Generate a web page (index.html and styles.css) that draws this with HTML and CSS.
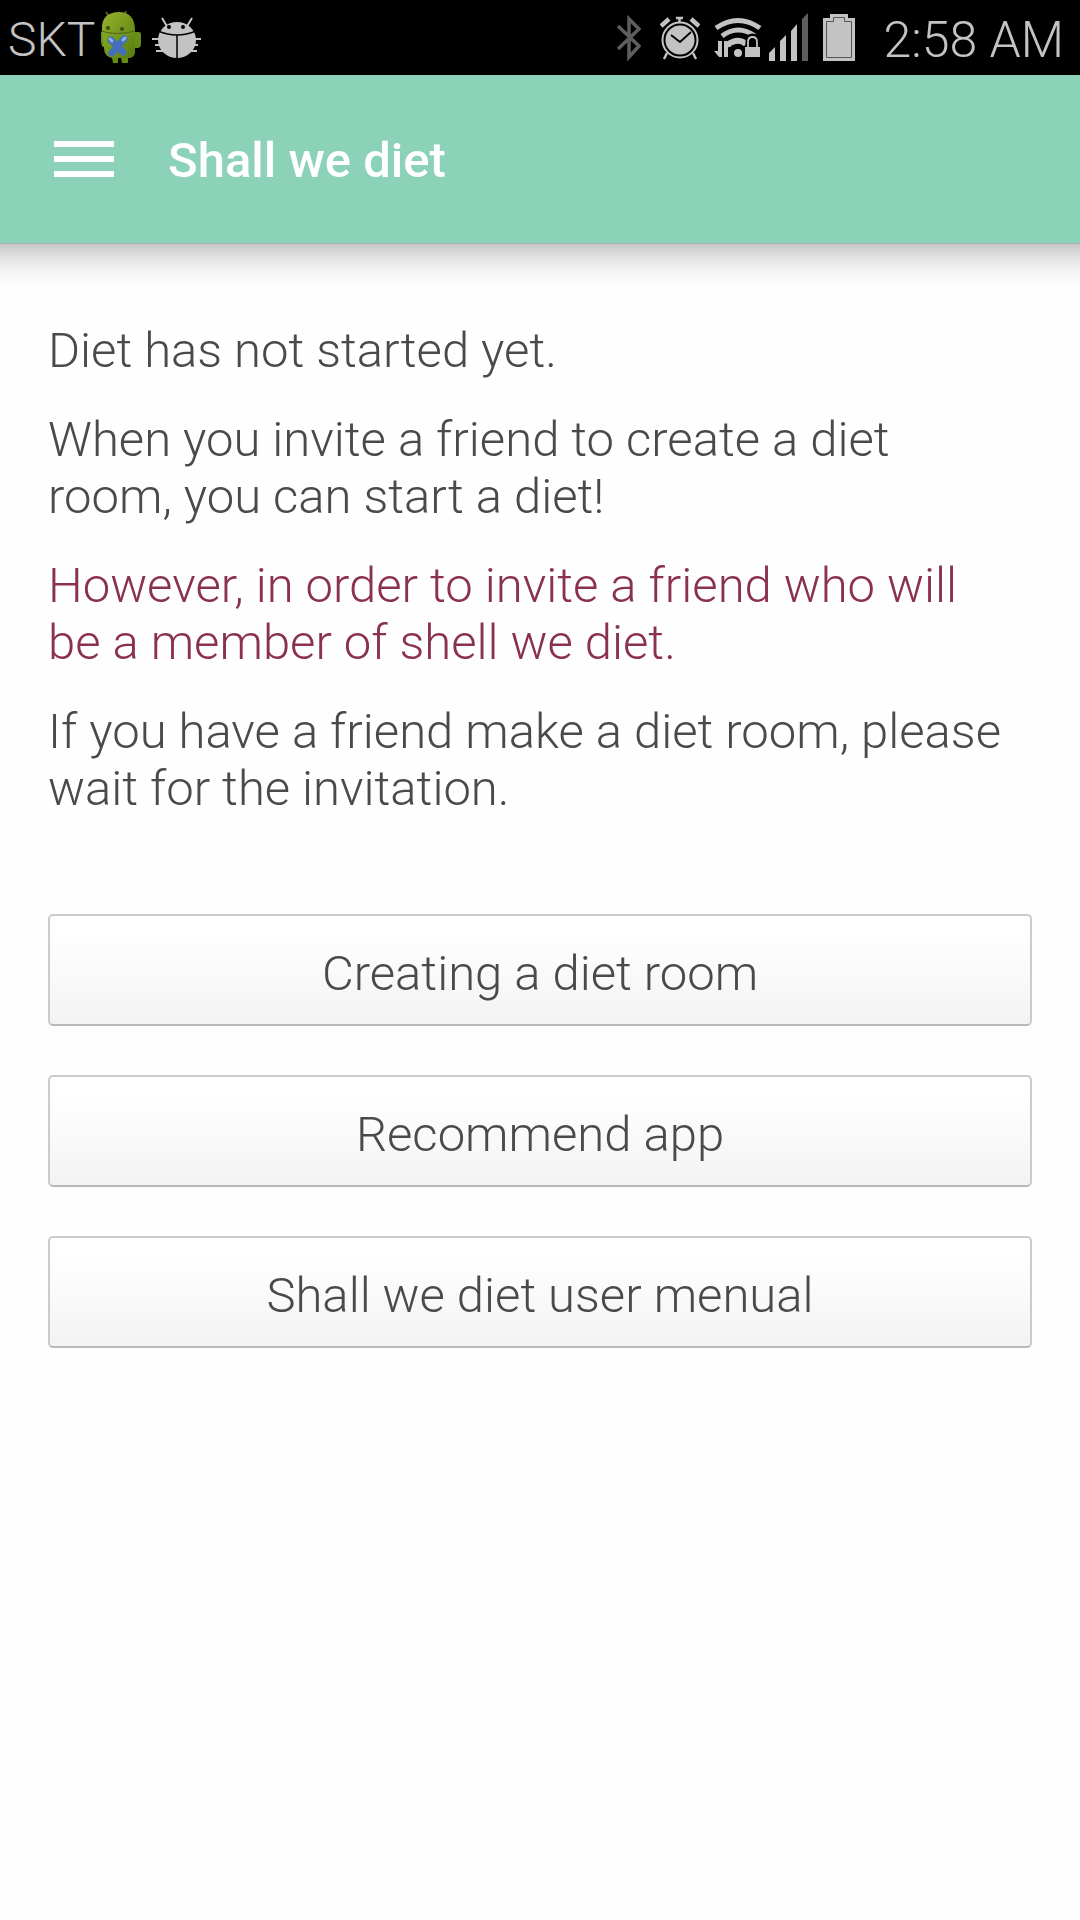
FILE: index.html
```html
<!DOCTYPE html>
<html lang="en">
<head>
  <meta charset="UTF-8">
  <meta name="viewport" content="width=device-width, initial-scale=1.0">
  <title>Shall we diet</title>
  <link rel="stylesheet" href="styles.css">
</head>
<body>
  <div class="status-bar">
    <div class="status-left">
      <span class="carrier">SKT</span>
      <!-- Green robot -->
      <svg class="robot-icon" width="42" height="56" viewBox="0 0 42 56" aria-hidden="true">
        <defs>
          <linearGradient id="robotGreen" x1="0" y1="0" x2="1" y2="1">
            <stop offset="0" stop-color="#95b32c"/>
            <stop offset="1" stop-color="#567c0e"/>
          </linearGradient>
        </defs>
        <path d="M6 2l3 5M26 1l-2 5" stroke="#50641c" stroke-width="2"/>
        <path d="M34 22h5q2 0 2 3v9q0 4-4 4h-3z" fill="#688e1a"/>
        <path d="M1 22h4v15h-2q-2-2-2-6z" fill="#6f941e"/>
        <path d="M11 42h7v11h-5zM20 42h8v11h-6z" fill="#638a15"/>
        <path d="M2 20C1 8 8 2 19 2s16 7 16 18v22q0 5-5 6H12q-8-2-8-10z" fill="url(#robotGreen)"/>
        <path d="M1 21q16 5 34 0" stroke="#49661a" stroke-width="1" fill="none"/>
        <circle cx="8" cy="18" r="2" fill="#3a4d12"/>
        <circle cx="22" cy="19" r="2" fill="#3a4d12"/>
        <path d="M11 30l12 12M24 29L12 43" stroke="#4470bb" stroke-width="7" stroke-linecap="round"/>
        <path d="M10 29l2 2M25 28l-2 2" stroke="#91b4de" stroke-width="3" stroke-linecap="round"/>
      </svg>
      <!-- USB debugging bug -->
      <svg class="bug-icon" width="50" height="44" viewBox="0 0 50 44" aria-hidden="true">
        <path d="M10 2l6 10M40 2l-6 10" stroke="#c3c3c3" stroke-width="2"/>
        <path d="M0 23h49M3 29h43M4 35h41" stroke="#c3c3c3" stroke-width="2"/>
        <ellipse cx="25" cy="24" rx="19" ry="18" fill="#c3c3c3"/>
        <path d="M6 15q19 8 38 0M25 19v24" stroke="#000" stroke-width="1.500" fill="none"/>
        <circle cx="17" cy="11" r="2" fill="#000"/>
        <circle cx="31" cy="11" r="2" fill="#000"/>
      </svg>
    </div>
    <div class="status-right">
      <!-- Bluetooth -->
      <svg width="24" height="50" viewBox="0 0 24 50" aria-hidden="true">
        <path d="M1 13l21 20-10 11V6l10 10L1 36" stroke="#5e5e5e" stroke-width="3.500" fill="none"/>
      </svg>
      <!-- Alarm -->
      <svg width="40" height="50" viewBox="0 0 40 50" aria-hidden="true">
        <circle cx="20" cy="27" r="17.500" stroke="#c3c3c3" stroke-width="2" fill="none"/>
        <circle cx="20" cy="27" r="14.500" fill="#c3c3c3"/>
        <path d="M11 22l9 7 11-10" stroke="#000" stroke-width="1.800" fill="none"/>
        <path d="M16 5h7M19.500 4v5M7 40l-3 6M33 40l3 6" stroke="#c3c3c3" stroke-width="2.500"/>
        <path d="M1 13l8-7M39 13l-8-7" stroke="#c3c3c3" stroke-width="4.500"/>
      </svg>
      <!-- Secured wifi with traffic arrows -->
      <svg class="wifi-icon" width="48" height="50" viewBox="0 0 48 50" aria-hidden="true">
        <path d="M2 15q22-15 44 0" stroke="#c3c3c3" stroke-width="5" fill="none"/>
        <path d="M8 23q16-12 33 0" stroke="#c3c3c3" stroke-width="5" fill="none"/>
        <path d="M13 32q11-8 19-1" stroke="#c3c3c3" stroke-width="6" fill="none"/>
        <circle cx="24" cy="40" r="4" fill="#c3c3c3"/>
        <path d="M4 28h4v16H5l-5-6h4zM10 44V28h3l4 6h-3v10z" fill="#c3c3c3"/>
        <path d="M34 34v-6q0-5 4.500-5t4.500 5v6" stroke="#000" stroke-width="5" fill="#000"/>
        <path d="M34 35v-6q0-5 4.500-5t4.500 5v6" stroke="#c3c3c3" stroke-width="1.800" fill="none"/>
        <path d="M31 34h15v10H31z" fill="#c3c3c3"/>
      </svg>
      <!-- Signal strength -->
      <svg width="39" height="50" viewBox="0 0 39 50" aria-hidden="true">
        <path d="M0 48v-8l6-6v14zM11 48V28l6-6v26zM22 48V18l6-7v37z" fill="#c3c3c3"/>
        <path d="M33 48V6l6-6v48z" fill="#5e5e5e"/>
      </svg>
      <!-- Battery -->
      <svg class="battery-icon" width="32" height="50" viewBox="0 0 32 50" aria-hidden="true">
        <path d="M0 48V5h7V1h18v4h7v43z" fill="#c3c3c3"/>
        <path d="M3.500 44.500v-36h7v-4h11v4h7v36z" stroke="#555" stroke-width="1" fill="none"/>
      </svg>
      <span class="clock">2:58 AM</span>
    </div>
  </div>

  <header>
    <button class="menu-button" aria-label="Open menu">
      <span></span>
      <span></span>
      <span></span>
    </button>
    <h1>Shall we diet</h1>
  </header>

  <main>
    <div class="message">
      <p>Diet has not started yet.</p>
      <p>When you invite a friend to create a diet<br>room, you can start a diet!</p>
      <p class="notice">However, in order to invite a friend who will<br>be a member of shell we diet.</p>
      <p>If you have a friend make a diet room, please<br>wait for the invitation.</p>
    </div>
    <div class="actions">
      <button class="action-button">Creating a diet room</button>
      <button class="action-button">Recommend app</button>
      <button class="action-button">Shall we diet user menual</button>
    </div>
  </main>
</body>
</html>
```

FILE: styles.css
```css
body {
  margin: 0;
  font-family: Roboto, "Liberation Sans", sans-serif;
  background-color: #fefefe;
  color: #4a4a4a;
}

/* Status bar */
.status-bar {
  display: flex;
  justify-content: space-between;
  align-items: center;
  height: 75px;
  padding: 0 16px 0 8px;
  background-color: #000;
  color: #c3c3c3;
  font-size: 48px;
  font-weight: 300;
  line-height: 56px;
  white-space: nowrap;
}

.status-bar svg {
  flex: none;
}

.status-left,
.status-right {
  display: flex;
  align-items: center;
}

.status-left {
  gap: 5px;
}

.carrier,
.clock {
  padding-top: 4px;
}

.clock {
  font-size: 50px;
}

.bug-icon {
  margin-left: 5px;
}

.status-right {
  gap: 19px;
}

.wifi-icon {
  margin: 0 -12px 0 -5px;
}

.battery-icon {
  margin: 0 10px 0 -4px;
}

/* App bar */
header {
  display: flex;
  align-items: center;
  gap: 54px;
  height: 168px;
  padding: 0 54px;
  background-color: #8cd2b9;
  border-bottom: 1px solid #a9b5af;
}

/* Soft shadow under the app bar */
main::before {
  content: "";
  display: block;
  height: 42px;
  background: linear-gradient(#c6c6c6, #e0e0e0 30%, #f4f4f4 65%, #fefefe);
}

.menu-button {
  display: flex;
  flex-direction: column;
  gap: 9px;
  width: 60px;
  padding: 0;
  border: none;
  background: none;
  cursor: pointer;
}

.menu-button span {
  height: 6px;
  background-color: #fff;
}

header h1 {
  margin: 0;
  padding-top: 4px;
  color: #fff;
  font-size: 49px;
  font-weight: 500;
  line-height: 60px;
}

/* Messages */
.message {
  display: flex;
  flex-direction: column;
  gap: 32px;
  padding: 36px 48px 97px;
  font-size: 49px;
  font-weight: 350;
  line-height: 57px;
}

.message p {
  margin: 0;
}

.message .notice {
  color: #8a3052;
}

/* Buttons */
.actions {
  display: flex;
  flex-direction: column;
  gap: 49px;
  padding: 0 48px 48px;
}

.action-button {
  height: 112px;
  padding: 6px 0 0;
  border: 2px solid #cbcbcb;
  border-bottom-color: #b9b9b9;
  border-radius: 5px;
  background: linear-gradient(#fff 15%, #f3f3f3);
  color: #4a4a4a;
  font-family: inherit;
  font-size: 49px;
  font-weight: 350;
  cursor: pointer;
}
```
